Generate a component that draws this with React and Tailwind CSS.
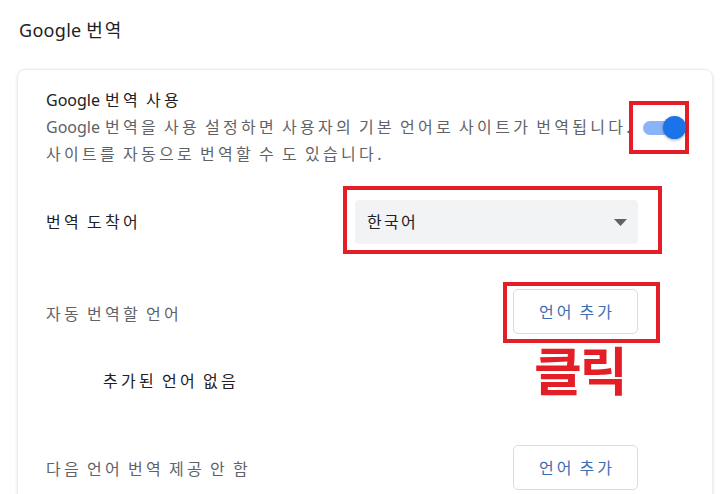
import React from 'react';

function AddButton() {
  return (
    <button className="h-[45px] w-[125px] rounded-[5px] border border-[#dadce0] bg-white pl-[3px] text-[16px] tracking-[3px] text-[#3f6db3] [word-spacing:-2px]">
      언어 추가
    </button>
  );
}

export default function App() {
  return (
    <div
      className="relative h-[494px] w-[720px] overflow-hidden bg-white text-[#202124]"
      style={{ fontFamily: '"Noto Sans", "Noto Sans CJK KR", sans-serif' }}
    >
      <h2 className="pl-[19px] pt-[17px] text-[18px] leading-[26px]">
        <span className="tracking-[0.3px]">Google</span> <span className="tracking-[2px]">번역</span>
      </h2>

      <div className="ml-[17px] mr-[7px] mt-[26px] h-[480px] rounded-[8px] border border-[#ececec] shadow-[0_1px_3px_rgba(0,0,0,0.12)]">
        {/* 사용 토글 */}
        <div className="relative flex pl-[28px] pt-[17px]">
          <div className="flex-1 tracking-[3.3px] [word-spacing:-2.5px]">
            <div className="text-[16px] leading-[27px]">
              <span className="tracking-normal">Google</span> 번역 사용
            </div>
            <div className="whitespace-nowrap text-[16px] leading-[27px] text-[#5f6368]">
              <span className="tracking-normal">Google</span> 번역을 사용 설정하면 사용자의 기본 언어로 사이트가 번역됩니다.
              <br />
              사이트를 자동으로 번역할 수 도 있습니다.
            </div>
          </div>
          <div className="absolute left-[611px] top-[31px] h-[53px] w-[60px] border-4 border-[#e41e26]">
            <div className="relative ml-[10px] mt-[16px] h-[14px] w-[37px] rounded-full bg-[#8ab4f8]">
              <div className="absolute -top-[5px] left-[20px] h-[23px] w-[23px] rounded-full bg-[#1a73e8] shadow-[0_1px_3px_rgba(0,0,0,0.35)]" />
            </div>
          </div>
        </div>

        {/* 번역 도착어 */}
        <div className="mt-[32px] flex items-center pl-[28px] pr-[74px]">
          <div className="flex-1 text-[16px] tracking-[3.3px] [word-spacing:-2.5px]">번역 도착어</div>
          <div className="relative">
            <div className="absolute -left-[12px] -top-[14px] h-[68px] w-[319px] border-4 border-[#e41e26]" />
            <div className="relative flex h-[44px] w-[283px] items-center justify-between rounded-[4px] bg-[#f1f3f4] pl-[12px] pr-[11px]">
              <span className="text-[16px] tracking-[2.3px]">한국어</span>
              <svg width="13" height="7" viewBox="0 0 13 7">
                <path d="M0 0h13L6.5 7z" fill="#5f6368" />
              </svg>
            </div>
          </div>
        </div>

        {/* 자동 번역할 언어 */}
        <div className="mt-[45px] flex items-center pl-[28px] pr-[74px]">
          <div className="flex-1 pt-[4px] text-[16px] tracking-[3.3px] text-[#5f6368] [word-spacing:-2.5px]">자동 번역할 언어</div>
          <div className="relative">
            <div className="absolute -left-[10px] -top-[7px] h-[61px] w-[157px] border-4 border-[#e41e26]" />
            <div className="relative">
              <AddButton />
            </div>
          </div>
        </div>

        <div className="mt-[10px] flex items-start pr-[74px]">
          <div className="flex-1 pl-[85px] pt-[24px] text-[16px] leading-[27px] tracking-[3.3px] [word-spacing:-2.5px]">추가된 언어 없음</div>
          <div className="w-[125px] pl-[21px] text-[52px] font-bold leading-[54px] tracking-[-2px] text-[#e41e26]">클릭</div>
        </div>

        {/* 다음 언어 번역 제공 안 함 */}
        <div className="mt-[47px] flex items-center pl-[28px] pr-[74px]">
          <div className="flex-1 pt-[2px] text-[16px] tracking-[3.3px] text-[#5f6368] [word-spacing:-2.5px]">다음 언어 번역 제공 안 함</div>
          <AddButton />
        </div>
      </div>
    </div>
  );
}
